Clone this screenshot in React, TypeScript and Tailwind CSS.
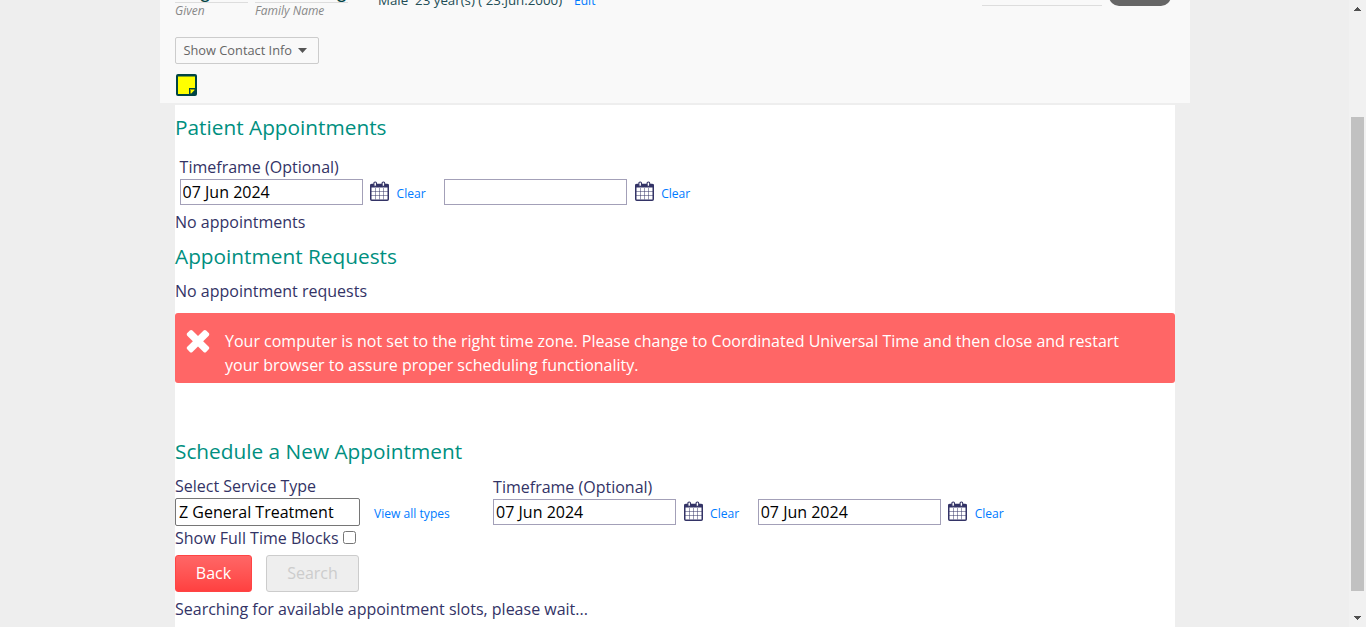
import React from "react";
import type { ReactNode } from "react";

function CalendarIcon() {
  return (
    <svg viewBox="0 0 19 20" className="h-5 w-[19px] shrink-0" fill="none">
      <path d="M5.5 7v11.5M9.5 7v11.5M13.5 7v11.5M1 10.5h17M1 14.5h17" stroke="#333366" strokeOpacity="0.5" />
      <rect x="0.75" y="3.5" width="17.5" height="15.75" rx="1" stroke="#333366" strokeWidth="1.5" />
      <path d="M0.5 3.2h18v3.3h-18z" fill="#333366" />
      <rect x="3.9" y="1" width="2.6" height="4.4" rx="1.2" fill="#ffffff" stroke="#333366" strokeWidth="1.1" />
      <rect x="12.1" y="1" width="2.6" height="4.4" rx="1.2" fill="#ffffff" stroke="#333366" strokeWidth="1.1" />
    </svg>
  );
}

function CrossIcon() {
  return (
    <svg viewBox="0 0 1792 1792" className="h-[34px] w-[34px] shrink-0" fill="#ffffff">
      <path d="M1490 1322q0 40-28 68l-136 136q-28 28-68 28t-68-28l-294-294-294 294q-28 28-68 28t-68-28l-136-136q-28-28-28-68t28-68l294-294-294-294q-28-28-28-68t28-68l136-136q28-28 68-28t68 28l294 294 294-294q28-28 68-28t68 28l136 136q28 28 28 68t-28 68l-294 294 294 294q28 28 28 68z" />
    </svg>
  );
}

function NoteIcon() {
  return (
    <svg viewBox="0 0 21 22" className="h-[22px] w-[21px]">
      <rect width="21" height="22" rx="2" fill="#004444" />
      <path d="M2 2.5h17v11.5h-6v6h-11z" fill="#ffff00" />
      <path d="M14 15h5l-5 5z" fill="#8a9a10" />
      <path d="M15 16h3.6l-3.6 3.8z" fill="#ffff00" />
    </svg>
  );
}

function Heading({ children }: { children: ReactNode }) {
  return <h2 className="h-[30px] text-[20.8px] leading-[29px] text-[#008f80]">{children}</h2>;
}

function DateField({ value }: { value: string }) {
  return (
    <div className="flex items-start">
      <input
        type="text"
        defaultValue={value}
        className="h-[26px] w-[183px] border border-[#a3a0b8] bg-white pl-[2px] text-base leading-6 text-black"
      />
      <div className="ml-[7.6px] mt-[2px] flex">
        <CalendarIcon />
      </div>
      <a className="ml-[7.4px] mt-[6px] w-[30.6px] text-[12.1px] leading-[18px] text-[#007bff]">Clear</a>
    </div>
  );
}

function Timeframe({ from, to }: { from: string; to: string }) {
  return (
    <div>
      <div className="h-6 leading-6">Timeframe (Optional)</div>
      <div className="flex gap-[17px]">
        <DateField value={from} />
        <DateField value={to} />
      </div>
    </div>
  );
}

function PatientHeader() {
  return (
    <header className="ml-[160px] flex h-[103px] w-[1030px] flex-col overflow-hidden bg-[#f9f9f9] pl-[15px]">
      <div className="flex h-[37px] items-start">
        <div className="w-[73px]">
          <div className="flex h-[3px] items-start border-b border-[#dddddd] pl-[5px] text-[16px] font-semibold leading-5 text-[#004444]">
            <span className="-mt-[18px]">Ang</span>
          </div>
          <div className="text-[12px] italic leading-4 text-[#888888]">Given</div>
        </div>
        <div className="ml-[7px] w-[93px]">
          <div className="flex h-[3px] items-start justify-end border-b border-[#dddddd] pr-[2px] text-[16px] font-semibold leading-5 text-[#004444]">
            <span className="-mt-[18px]">Wang</span>
          </div>
          <div className="text-[12px] italic leading-4 text-[#888888]">Family Name</div>
        </div>
        <div className="-mt-[9px] ml-[30px] flex w-[604px] text-[13.3px] leading-[18px] text-[#224d55]">
          <span className="w-[196px] whitespace-pre">Male  23 year(s) ( 23.Jun.2000)</span>
          <span className="pt-px text-[12.1px] text-[#007bff]">Edit</span>
        </div>
        <div className="h-[6px] w-[120px] border-b border-[#dddddd]" />
        <div className="-mt-[18px] ml-[7px] flex h-6 w-[62px] items-center justify-center rounded-[10px] bg-[#666666] pb-[2px] text-[13px] text-white">
          Sign
        </div>
      </div>
      <button className="flex h-[27px] w-[144px] items-center rounded-[2px] border border-[#cccccc] pl-[7.5px] text-[12.8px] text-[#666666]">
        Show Contact Info
        <svg viewBox="0 0 9 5" className="-mt-px ml-[6px] h-[5px] w-[9px]" fill="#555555">
          <path d="M0 0h9l-4.5 5z" />
        </svg>
      </button>
      <div className="ml-px mt-[10px]">
        <NoteIcon />
      </div>
    </header>
  );
}

function Scrollbar() {
  return (
    <div className="flex h-full w-[17px] shrink-0 flex-col items-center bg-[#f1f1f1]">
      <svg viewBox="0 0 7 4" className="mt-[7px] h-1 w-[7px]" fill="#505050" shapeRendering="crispEdges">
        <path d="M3 0h1v1h1v1h1v1h1v1h-7v-1h1v-1h1v-1h1z" />
      </svg>
      <div className="mt-[106px] h-[474px] w-[13px] bg-[#c1c1c1]" />
      <svg viewBox="0 0 7 4" className="mt-[25px] h-1 w-[7px]" fill="#505050" shapeRendering="crispEdges">
        <path d="M0 0h7v1h-1v1h-1v1h-1v1h-1v-1h-1v-1h-1v-1h-1z" />
      </svg>
    </div>
  );
}

export default function App() {
  return (
    <div className="flex h-[627px] w-[1366px] overflow-hidden bg-[#eeeeee] font-['Open_Sans',sans-serif] text-base text-[#333366]">
      <div className="flex h-full w-[1349px] flex-col">
        <PatientHeader />
        <main className="ml-[175px] mt-[2px] h-[522px] w-[1000px] bg-white pt-2">
          <Heading>Patient Appointments</Heading>
          <div className="mt-3 pl-[4.6px]">
            <Timeframe from="07 Jun 2024" to="" />
          </div>
          <div className="mt-[5px] leading-6">No appointments</div>
          <div className="mt-2">
            <Heading>Appointment Requests</Heading>
          </div>
          <div className="mt-[7px] leading-6">No appointment requests</div>
          <div className="mt-[10px] flex h-[70px] rounded-[3px] bg-[#ff6666] pl-[6px] pt-4 leading-6 text-white">
            <div className="-mt-[6px]">
              <CrossIcon />
            </div>
            <p className="ml-[10px] w-[920px]">
              Your computer is not set to the right time zone. Please change to Coordinated Universal Time and then
              close and restart your browser to assure proper scheduling functionality.
            </p>
          </div>
          <div className="mt-[54px]">
            <Heading>Schedule a New Appointment</Heading>
          </div>
          <div className="mt-[7px] flex">
            <div className="w-[318.1px]">
              <div className="h-6 leading-6">Select Service Type</div>
              <div className="flex">
                <input
                  type="text"
                  defaultValue="Z General Treatment"
                  className="h-7 w-[185px] rounded-[2px] border border-[#767676] bg-white pl-[3px] text-base leading-6 text-black"
                />
                <a className="ml-[14px] mt-[7px] text-[12.1px] leading-[18px] text-[#007bff]">View all types</a>
              </div>
              <label className="flex h-6 items-center leading-6">
                Show Full Time Blocks
                <span className="mb-px ml-1 h-[13px] w-[13px] rounded-[2.5px] border border-[#767676] bg-white" />
              </label>
            </div>
            <div className="mt-px">
              <Timeframe from="07 Jun 2024" to="07 Jun 2024" />
            </div>
          </div>
          <div className="mt-[5px] flex gap-[14px]">
            <button className="h-[37px] w-[77px] rounded-[3px] border border-[#ff4444] bg-linear-to-b from-[#ff6666] to-[#ff4040] pb-[2px] text-white">
              Back
            </button>
            <button className="h-[37px] w-[93px] rounded-[3px] border border-[#cccccc] bg-[#eeeeee] pb-[2px] text-[#cccccc]">
              Search
            </button>
          </div>
          <div className="mt-[5px] leading-6">Searching for available appointment slots, please wait...</div>
        </main>
      </div>
      <Scrollbar />
    </div>
  );
}
